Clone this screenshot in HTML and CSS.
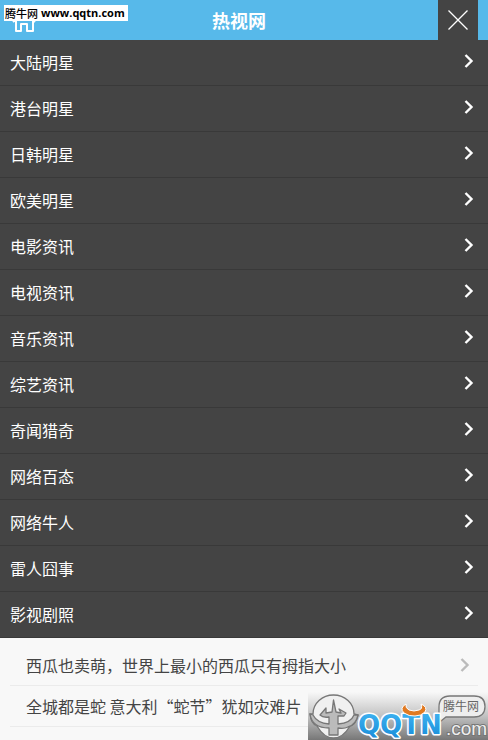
FILE: index.html
```html
<!DOCTYPE html>
<html lang="zh-CN">
<head>
<meta charset="utf-8">
<meta name="viewport" content="width=device-width, initial-scale=1">
<title>热视网</title>
<link rel="stylesheet" href="styles.css">
</head>
<body>
<header class="topbar">
  <a class="home" href="#" aria-label="首页">
    <svg width="24" height="24" viewBox="0 0 24 24"><path d="M1 12 12 2 23 12M4 11v10h5v-7h6v7h6V11" fill="none" stroke="#fff" stroke-width="2" stroke-linejoin="round"/></svg>
  </a>
  <h1 class="title">热视网</h1>
  <button class="close" type="button" aria-label="关闭">
    <svg width="20" height="20" viewBox="0 0 20 20"><path d="M.5.500 19.500 19.500M19.500.500.500 19.500" stroke="#fff" stroke-width="1.300"/></svg>
  </button>
  <span class="stamp"><span>腾牛网</span><span class="stamp-url">www.qqtn.com</span></span>
</header>
<svg class="defs" width="0" height="0"><symbol id="chevron" viewBox="0 0 10 14"><path d="M1.500 1 7.500 7l-6 6" fill="none" stroke="currentColor" stroke-width="2.400"/></symbol></svg>
<nav class="menu">
  <a href="#">大陆明星<svg class="arrow"><use href="#chevron"/></svg></a>
  <a href="#">港台明星<svg class="arrow"><use href="#chevron"/></svg></a>
  <a href="#">日韩明星<svg class="arrow"><use href="#chevron"/></svg></a>
  <a href="#">欧美明星<svg class="arrow"><use href="#chevron"/></svg></a>
  <a href="#">电影资讯<svg class="arrow"><use href="#chevron"/></svg></a>
  <a href="#">电视资讯<svg class="arrow"><use href="#chevron"/></svg></a>
  <a href="#">音乐资讯<svg class="arrow"><use href="#chevron"/></svg></a>
  <a href="#">综艺资讯<svg class="arrow"><use href="#chevron"/></svg></a>
  <a href="#">奇闻猎奇<svg class="arrow"><use href="#chevron"/></svg></a>
  <a href="#">网络百态<svg class="arrow"><use href="#chevron"/></svg></a>
  <a href="#">网络牛人<svg class="arrow"><use href="#chevron"/></svg></a>
  <a href="#">雷人囧事<svg class="arrow"><use href="#chevron"/></svg></a>
  <a href="#">影视剧照<svg class="arrow"><use href="#chevron"/></svg></a>
</nav>
<main class="news">
  <a href="#">西瓜也卖萌，世界上最小的西瓜只有拇指大小<svg class="arrow"><use href="#chevron"/></svg></a>
  <a href="#">全城都是蛇 意大利“蛇节”犹如灾难片</a>
</main>
<aside class="watermark">
  <svg width="180" height="48" viewBox="0 0 180 48">
    <defs>
      <linearGradient id="shade" x1="0" y1="0" x2="0" y2="1"><stop offset="0" stop-color="#f8f8f8"/><stop offset=".5" stop-color="#c2c2c2"/><stop offset="1" stop-color="#777"/></linearGradient>
      <linearGradient id="blue" x1="0" y1="0" x2="0" y2="1"><stop offset="0" stop-color="#42b5f2"/><stop offset="1" stop-color="#168bd8"/></linearGradient>
    </defs>
    <rect width="180" height="48" fill="url(#shade)"/>
    <path d="M5 22A20.500 19 0 0 1 46 22L50 23Q48 32 42 34 35 46 25.500 46T9 34Q3 32 2 22Z" fill="#f0f0f0" stroke="#777" stroke-width="1.300"/>
    <path d="M2 22 5 23Q9 31 21 32V25Q15 26 12 23L18 16 18 21 24 20 25.500 8 28 20 33 21 31 17 38 21 36 24 30 24V32Q43 31 46 23L50 23Q48 33 40 35 36 37 30 36V43H21V36Q4 36 2 22Z" fill="#bbb" stroke="#777" stroke-width="1.300" stroke-linejoin="round"/>
    <path d="M131 25V15Q131 4 142 4H166Q177 4 177 14.500T166 25H138L133 29Z" fill="#eee" stroke="#777" stroke-width="1.300"/>
    <text class="wm-label" x="135" y="19">腾牛网</text>
    <text class="wm-com" x="138" y="43">.com</text>
    <text class="wm-name" x="50" y="42">QQTN</text>
    <path d="M98 12Q91 16 96 21 101 24.500 107 24 113 24 117 20 120 15 113 12 115 17 111 18 106 20 101 18 97 16 98 12Z" fill="#e17a22" stroke="#fff" stroke-width="1"/>
  </svg>
</aside>
</body>
</html>
```
FILE: styles.css
```css
* { box-sizing: border-box; }
body {
  margin: 0;
  min-height: 100vh;
  position: relative;
  overflow: hidden;
  background: #f8f8f8;
  font-family: "Noto Sans CJK SC", sans-serif;
  font-size: 16px;
}
a { color: inherit; text-decoration: none; }
.defs { position: absolute; }
.topbar {
  position: relative;
  display: grid;
  grid-template-columns: 50px 1fr 50px;
  height: 40px;
  background: #57b9ea;
}
.home { padding: 10px 0 0 12px; }
.home svg { display: block; }
.title {
  margin: 0;
  color: #fff;
  font-size: 18px;
  line-height: 40px;
  text-align: center;
  padding-right: 10px;
}
.close {
  width: 40px;
  height: 40px;
  padding: 0;
  border: 0;
  background: #444;
  display: grid;
  place-items: center;
}
.stamp {
  position: absolute;
  left: 4px;
  top: 5px;
  display: flex;
  gap: 3px;
  height: 16px;
  padding: 0 3px 0 1px;
  background: #fff;
  color: #000;
  font-size: 11px;
  font-weight: 500;
  line-height: 16px;
}
.stamp-url { font-family: "Open Sans", sans-serif; font-weight: 700; }
.arrow { width: 10px; height: 14px; flex: none; }
.menu { background: #444; color: #fff; }
.menu a {
  display: flex;
  align-items: center;
  justify-content: space-between;
  height: 46px;
  padding: 0 14px 2px 10px;
  border-bottom: 1px solid #393939;
}
.menu .arrow { margin-bottom: 1px; }
.news { padding: 7px 10px; color: #444; }
.news a {
  display: flex;
  align-items: center;
  justify-content: space-between;
  height: 41px;
  padding: 0 8px 0 16px;
  border-bottom: 1px solid #ebebeb;
}
.news .arrow { color: #bbb; }
.watermark { position: absolute; right: 0; bottom: 0; }
.watermark svg { display: block; }
.wm-label { font-size: 12px; fill: #666; }
.wm-com {
  font-family: "Liberation Sans", sans-serif;
  font-size: 19px;
  fill: #eee;
  stroke: #777;
  stroke-width: 2px;
  paint-order: stroke;
}
.wm-name {
  font-family: "DejaVu Sans", sans-serif;
  font-size: 26px;
  font-weight: 700;
  fill: url(#blue);
  stroke: #fff;
  stroke-width: 3px;
  stroke-linejoin: round;
  paint-order: stroke;
}
```
